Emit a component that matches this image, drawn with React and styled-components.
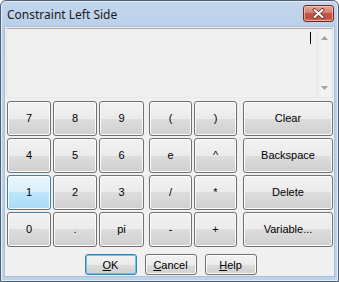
import React from "react";
import styled, { createGlobalStyle, css } from "styled-components";

const Global = createGlobalStyle`
  html, body { margin: 0; padding: 0; background: #ffffff; }
  body { width: 339px; height: 282px; overflow: hidden; }
  * { box-sizing: border-box; }
`;

const Window = styled.div`
  width: 339px;
  height: 282px;
  display: flex;
  flex-direction: column;
  border: 1px solid #4f5f73;
  border-radius: 6px 6px 0 0;
  background: linear-gradient(to bottom, #c3d6ee 0%, #b9cee9 30px, #bcd1ea 100%);
  box-shadow: inset 0 0 0 1px #e3ecf7;
  overflow: hidden;
`;

const TitleBar = styled.div`
  height: 25px;
  flex-shrink: 0;
  display: flex;
  align-items: center;
  justify-content: space-between;
  padding: 0 4px 0 6px;
`;

const Title = styled.span`
  font-family: "Noto Sans", "Open Sans", sans-serif;
  font-size: 12px;
  color: #1b1b1b;
  margin-top: 1px;
`;

const CloseButton = styled.div`
  width: 31px;
  height: 17px;
  border: 1px solid #6e2a22;
  border-radius: 3px;
  background: linear-gradient(to bottom, #e3a495 0%, #d58371 45%, #c45746 50%, #c0503f 80%, #d4775e 100%);
  box-shadow: inset 0 0 0 1px rgba(255, 220, 210, 0.55);
  display: flex;
  align-items: center;
  justify-content: center;
`;

const Client = styled.div`
  flex: 1;
  margin: 0 3px 4px 3px;
  background: #f0f0f0;
  display: flex;
  flex-direction: column;
  padding: 1px;
  border: 1px solid #aebfd5;
`;

const TextBox = styled.div`
  height: 70px;
  flex-shrink: 0;
  width: 327px;
  display: flex;
  border: 1px solid #abadb3;
  border-color: #abadb3 #dbdfe6 #e3e9ef #e2e3ea;
  background: #f0f0f0;
`;

const TextArea = styled.div`
  flex: 1;
  position: relative;
`;

const Caret = styled.div`
  position: absolute;
  right: 4px;
  top: 3px;
  width: 1px;
  height: 12px;
  background: #000;
`;

const ScrollBar = styled.div`
  width: 17px;
  display: flex;
  flex-direction: column;
  justify-content: space-between;
  align-items: center;
  padding: 7px 0 7px 0;
  background: linear-gradient(to right, #e9e9e9 0%, #f3f3f3 40%, #f1f1f1 100%);
  border-left: 1px solid #ededed;
`;

const Keypad = styled.div`
  display: flex;
  flex-shrink: 0;
  margin: 3px 0 0 1px;
`;

const KeyGrid = styled.div`
  display: grid;
  grid-template-columns: ${(p) => p.$cols};
  grid-auto-rows: 35px;
  gap: 2px;
  margin-right: ${(p) => p.$after || 0}px;
`;

const winButton = css`
  display: flex;
  align-items: center;
  justify-content: center;
  font-family: "Liberation Sans", Arial, sans-serif;
  font-size: 11px;
  color: #000;
  border: 1px solid #707070;
  border-radius: 3px;
  background: linear-gradient(to bottom, #f2f2f2 0%, #ebebeb 50%, #dddddd 50%, #cfcfcf 100%);
  box-shadow: inset 0 0 0 1px #fbfbfb;
`;

const Key = styled.div`
  ${winButton}
  padding-bottom: 1px;
  ${(p) =>
    p.$hot &&
    css`
      border-color: #3c7fb1;
      background: linear-gradient(to bottom, #eaf6fd 0%, #d9f0fc 50%, #bee6fd 50%, #a7d9f5 100%);
      box-shadow: inset 0 0 0 1px #f4fbfe;
    `}
`;

const DialogRow = styled.div`
  display: flex;
  flex-shrink: 0;
  justify-content: center;
  gap: 8px;
  margin-top: 7px;
  padding-left: 2px;
`;

const DialogButton = styled.div`
  ${winButton}
  width: 52px;
  height: 21px;
  ${(p) =>
    p.$default &&
    css`
      border-color: #3c7fb1;
      box-shadow: inset 0 0 0 1px #5ec8f0;
    `}
  u { text-decoration: underline; }
`;

const digits = ["7", "8", "9", "4", "5", "6", "1", "2", "3", "0", ".", "pi"];
const ops = ["(", ")", "e", "^", "/", "*", "-", "+"];
const actions = ["Clear", "Backspace", "Delete", "Variable..."];

function Arrow({ up }) {
  return (
    <svg width="7" height="4" viewBox="0 0 7 4">
      <path d={up ? "M0 4 L3.5 0 L7 4 Z" : "M0 0 L3.5 4 L7 0 Z"} fill="#a0a0a0" />
    </svg>
  );
}

export default function App() {
  return (
    <>
      <Global />
      <Window>
        <TitleBar>
          <Title>Constraint Left Side</Title>
          <CloseButton>
            <svg width="13" height="11" viewBox="0 0 13 11">
              <path d="M2.5 2 L10.5 9 M10.5 2 L2.5 9" stroke="#6a2a22" strokeWidth="3.6" strokeLinecap="round" />
              <path d="M2.5 2 L10.5 9 M10.5 2 L2.5 9" stroke="#ffffff" strokeWidth="2" strokeLinecap="round" />
            </svg>
          </CloseButton>
        </TitleBar>
        <Client>
          <TextBox>
            <TextArea>
              <Caret />
            </TextArea>
            <ScrollBar>
              <Arrow up />
              <Arrow />
            </ScrollBar>
          </TextBox>
          <Keypad>
            <KeyGrid $cols="44px 44px 45px" $after={5}>
              {digits.map((d) => (
                <Key key={d} $hot={d === "1"}>{d}</Key>
              ))}
            </KeyGrid>
            <KeyGrid $cols="43px 43px" $after={6}>
              {ops.map((o) => (
                <Key key={o}>{o}</Key>
              ))}
            </KeyGrid>
            <KeyGrid $cols="90px">
              {actions.map((a) => (
                <Key key={a}>{a}</Key>
              ))}
            </KeyGrid>
          </Keypad>
          <DialogRow>
            <DialogButton $default><span><u>O</u>K</span></DialogButton>
            <DialogButton><span><u>C</u>ancel</span></DialogButton>
            <DialogButton><span><u>H</u>elp</span></DialogButton>
          </DialogRow>
        </Client>
      </Window>
    </>
  );
}
